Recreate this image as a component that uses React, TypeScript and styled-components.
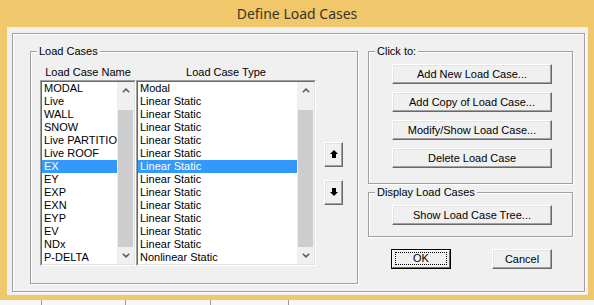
import React from "react";
import styled, { createGlobalStyle } from "styled-components";

const Global = createGlobalStyle`
  html, body { margin: 0; padding: 0; background: #f0c76a; }
  body { font-family: "Liberation Sans", Arial, sans-serif; }
  * { box-sizing: border-box; }
`;

const Window = styled.div`
  width: 594px;
  height: 305px;
  background: #f0c76a;
  display: flex;
  flex-direction: column;
  overflow: hidden;
`;

const TitleBar = styled.div`
  height: 27px;
  flex: none;
  display: flex;
  align-items: center;
  justify-content: center;
  font-family: "Noto Sans", "Open Sans", sans-serif;
  font-size: 14px;
  color: #3b3424;
`;

const Client = styled.div`
  margin: 0 6px 5px 7px;
  height: 268px;
  flex: none;
  background: #f0f0f0;
  padding: 6px 3px 3px 5px;
  display: flex;
`;

const Frame = styled.div`
  flex: 1;
  border: 1px solid #a0a0a0;
  box-shadow: inset 1px 1px 0 #fff, 1px 1px 0 #fff;
  display: flex;
  align-items: flex-start;
  padding: 17px 0 0 17px;
  font-family: "Liberation Sans", Arial, sans-serif;
  font-size: 11px;
  line-height: 13px;
  color: #000;
`;

const Group = styled.div<{ $w: number; $h: number }>`
  position: relative;
  width: ${(p) => p.$w}px;
  height: ${(p) => p.$h}px;
  flex: none;
  border: 1px solid #a0a0a0;
  box-shadow: inset 1px 1px 0 #fff, 1px 1px 0 #fff;
`;

const Legend = styled.span`
  position: absolute;
  top: -7px;
  left: 6px;
  padding: 0 2px;
  background: #f0f0f0;
  white-space: nowrap;
`;

const LoadCasesBody = styled.div`
  display: flex;
  padding: 14px 0 0 9px;
`;

const ListColumn = styled.div<{ $w: number }>`
  width: ${(p) => p.$w}px;
  display: flex;
  flex-direction: column;
`;

const ColumnHeader = styled.div`
  height: 13px;
  margin-bottom: 1px;
  text-align: center;
  white-space: nowrap;
`;

const ListOuter = styled.div`
  height: 186px;
  border: 1px solid;
  border-color: #a0a0a0 #ffffff #ffffff #a0a0a0;
`;

const ListInner = styled.div`
  height: 100%;
  border: 1px solid;
  border-color: #696969 #e3e3e3 #e3e3e3 #696969;
  background: #fff;
  display: flex;
  overflow: hidden;
`;

const Items = styled.div`
  flex: 1;
  min-width: 0;
  overflow: hidden;
`;

const Row = styled.div<{ $sel?: boolean }>`
  height: 13px;
  line-height: 13px;
  padding-left: 2px;
  white-space: nowrap;
  overflow: hidden;
  background: ${(p) => (p.$sel ? "#3399ff" : "transparent")};
  color: ${(p) => (p.$sel ? "#fff" : "#000")};
`;

const ScrollBar = styled.div`
  width: 17px;
  flex: none;
  display: flex;
  flex-direction: column;
  background: #f0f0f0;
`;

const ScrollBtn = styled.div`
  height: 17px;
  flex: none;
  display: flex;
  align-items: center;
  justify-content: center;
`;

const ScrollGap = styled.div`
  height: 11px;
  flex: none;
`;

const Thumb = styled.div`
  flex: 1;
  margin: 0 1px;
  background: #cdcdcd;
`;

const ArrowColumn = styled.div`
  margin: 14px 0 0 8px;
  height: 186px;
  display: flex;
  flex-direction: column;
  justify-content: center;
  gap: 13px;
`;

const ClassicButton = styled.div<{ $w: number; $h: number }>`
  width: ${(p) => p.$w}px;
  height: ${(p) => p.$h}px;
  flex: none;
  background: #f0f0f0;
  border: 1px solid;
  border-color: #ffffff #696969 #696969 #ffffff;
  box-shadow: inset -1px -1px 0 #a0a0a0, inset 1px 1px 0 #e3e3e3;
  display: flex;
  align-items: center;
  justify-content: center;
  white-space: nowrap;
  font-size: 11px;
  line-height: 13px;
  color: #000;
`;

const DefaultButton = styled.div`
  width: 60px;
  height: 20px;
  flex: none;
  border: 1px solid #000;
  display: flex;
`;

const DefaultFace = styled.div`
  flex: 1;
  background: #f0f0f0;
  border: 1px solid;
  border-color: #ffffff #696969 #696969 #ffffff;
  padding: 1px 2px 2px 2px;
  display: flex;
`;

const FocusRect = styled.div`
  flex: 1;
  border: 1px dotted #000;
  display: flex;
  align-items: center;
  justify-content: center;
`;

const RightColumn = styled.div`
  margin-left: 10px;
  display: flex;
  flex-direction: column;
`;

const ButtonStack = styled.div`
  display: flex;
  flex-direction: column;
  gap: 8px;
  padding: 12px 0 0 23px;
`;

const DisplayGroupWrap = styled.div`
  margin-top: 8px;
`;

const DialogButtons = styled.div`
  margin-top: 12px;
  padding-left: 23px;
  display: flex;
  gap: 41px;
`;

const BottomStrip = styled.div`
  height: 5px;
  flex: none;
  display: flex;
  background: #f7f7f7;
`;

const StripCell = styled.div<{ $w: number }>`
  width: ${(p) => p.$w}px;
  flex: none;
  border-right: 1px solid #9a9a9a;
`;

const Chevron = ({ up }: { up: boolean }) => (
  <svg width="8" height="5" viewBox="0 0 8 5">
    <path
      d={up ? "M0.8 4.3 L4 1.1 L7.2 4.3" : "M0.8 0.7 L4 3.9 L7.2 0.7"}
      fill="none"
      stroke="#606060"
      strokeWidth="1.6"
    />
  </svg>
);

const BlockArrow = ({ up }: { up: boolean }) => (
  <svg width="8" height="8" viewBox="0 0 8 8">
    <path
      d={up ? "M4 0 L8 4 H6 V8 H2 V4 H0 Z" : "M4 8 L8 4 H6 V0 H2 V4 H0 Z"}
      fill="#000"
    />
  </svg>
);

const names = [
  "MODAL",
  "Live",
  "WALL",
  "SNOW",
  "Live PARTITION",
  "Live ROOF",
  "EX",
  "EY",
  "EXP",
  "EXN",
  "EYP",
  "EV",
  "NDx",
  "P-DELTA",
];
const types = names.map((n, i) =>
  i === 0 ? "Modal" : i === names.length - 1 ? "Nonlinear Static" : "Linear Static"
);
const SELECTED = 6;

const ListBox = ({ items }: { items: string[] }) => (
  <ListOuter>
    <ListInner>
      <Items>
        {items.map((t, i) => (
          <Row key={i} $sel={i === SELECTED}>
            {t}
          </Row>
        ))}
      </Items>
      <ScrollBar>
        <ScrollBtn>
          <Chevron up />
        </ScrollBtn>
        <ScrollGap />
        <Thumb />
        <ScrollBtn>
          <Chevron up={false} />
        </ScrollBtn>
      </ScrollBar>
    </ListInner>
  </ListOuter>
);

export default function App() {
  return (
    <>
      <Global />
      <Window>
        <TitleBar>Define Load Cases</TitleBar>
        <Client>
          <Frame>
            <Group $w={328} $h={233}>
              <Legend>Load Cases</Legend>
              <LoadCasesBody>
                <ListColumn $w={96}>
                  <ColumnHeader>Load Case Name</ColumnHeader>
                  <ListBox items={names} />
                </ListColumn>
                <ListColumn $w={180}>
                  <ColumnHeader>Load Case Type</ColumnHeader>
                  <ListBox items={types} />
                </ListColumn>
                <ArrowColumn>
                  <ClassicButton $w={19} $h={25}>
                    <BlockArrow up />
                  </ClassicButton>
                  <ClassicButton $w={19} $h={25}>
                    <BlockArrow up={false} />
                  </ClassicButton>
                </ArrowColumn>
              </LoadCasesBody>
            </Group>
            <RightColumn>
              <Group $w={205} $h={133}>
                <Legend>Click to:</Legend>
                <ButtonStack>
                  <ClassicButton $w={160} $h={20}>Add New Load Case...</ClassicButton>
                  <ClassicButton $w={160} $h={20}>Add Copy of Load Case...</ClassicButton>
                  <ClassicButton $w={160} $h={20}>Modify/Show Load Case...</ClassicButton>
                  <ClassicButton $w={160} $h={20}>Delete Load Case</ClassicButton>
                </ButtonStack>
              </Group>
              <DisplayGroupWrap>
                <Group $w={205} $h={45}>
                  <Legend>Display Load Cases</Legend>
                  <ButtonStack>
                    <ClassicButton $w={160} $h={20}>Show Load Case Tree...</ClassicButton>
                  </ButtonStack>
                </Group>
              </DisplayGroupWrap>
              <DialogButtons>
                <DefaultButton>
                  <DefaultFace>
                    <FocusRect>OK</FocusRect>
                  </DefaultFace>
                </DefaultButton>
                <ClassicButton $w={60} $h={20}>Cancel</ClassicButton>
              </DialogButtons>
            </RightColumn>
          </Frame>
        </Client>
        <BottomStrip>
          <StripCell $w={42} />
          <StripCell $w={84} />
          <StripCell $w={85} />
          <StripCell $w={78} />
        </BottomStrip>
      </Window>
    </>
  );
}
